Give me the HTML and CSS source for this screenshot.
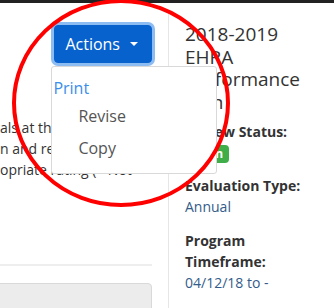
FILE: index.html
```html
<!DOCTYPE html>
<html lang="en">
<head>
    <meta charset="UTF-8">
    <meta name="viewport" content="width=device-width, initial-scale=1.0">
    <title>Performance Plan</title>
    <link rel="stylesheet" href="styles.css">
</head>
<body>
    <div class="topbar"></div>
    <div class="page">
        <div class="main">
            <div class="toolbar">
                <div class="actions">
                    <button type="button" class="btn-actions">Actions<span class="caret"></span></button>
                    <div class="dropdown">
                        <a class="item-print">Print</a>
                        <a class="item">Revise</a>
                        <a class="item">Copy</a>
                    </div>
                </div>
            </div>
            <p class="intro">als at the end of the<br>n and review the<br>opriate rating (* Not</p>
            <div class="divider"></div>
            <div class="panel"></div>
        </div>

        <aside class="side">
            <h2 class="plan-title">2018-2019 EHRA Performance Plan</h2>
            <div class="field first">
                <div class="field-label">Review Status:</div>
                <span class="badge">Open</span>
            </div>
            <div class="field">
                <div class="field-label">Evaluation Type:</div>
                <div class="field-value">Annual</div>
            </div>
            <div class="field">
                <div class="field-label">Program Timeframe:</div>
                <div class="field-value">04/12/18 to -</div>
            </div>
        </aside>
    </div>

    <!-- marca roja sobre la captura -->
    <svg class="mark" width="334" height="308" viewBox="0 0 334 308">
        <ellipse cx="121" cy="103" rx="107" ry="102" fill="none" stroke="#f00" stroke-width="4"/>
    </svg>
</body>
</html>
```

FILE: styles.css
```css
body {
    margin: 0;
    font-family: "Open Sans", "Liberation Sans", sans-serif;
    color: #333;
    background-color: #fff;
    overflow: hidden;
}
.topbar {
    height: 3px;
    background-color: #222;
}
.page {
    display: flex;
    align-items: flex-start;
}
.main {
    width: 168px;
    flex: none;
    padding-right: 16px;
    box-sizing: border-box;
}
.toolbar {
    display: flex;
    justify-content: flex-end;
    padding-top: 22px;
}
.actions {
    position: relative;
}
.btn-actions {
    display: flex;
    align-items: center;
    height: 38px;
    padding: 0 13px 0 10px;
    font-family: inherit;
    font-size: 16px;
    line-height: 24px;
    color: #fff;
    background-color: #0862cd;
    border: 1px solid #0862cd;
    border-radius: 4px;
    box-shadow: 0 0 0 3px #8dbcf2;
    cursor: pointer;
}
.caret {
    margin-left: 10px;
    border-top: 4px solid #fff;
    border-left: 4.5px solid transparent;
    border-right: 4.5px solid transparent;
}
.dropdown {
    position: absolute;
    top: calc(100% + 3px);
    left: -3px;
    z-index: 2;
    width: 166px;
    padding: 9px 0 9px 1px;
    box-sizing: border-box;
    background-color: #fff;
    border: 1px solid #d9d9d9;
    border-radius: 3px;
}
.item-print {
    display: block;
    font-size: 16px;
    line-height: 24px;
    color: #3b8eea;
}
.item {
    display: block;
    padding: 4px 0 4px 25px;
    font-size: 16px;
    line-height: 24px;
    color: #555;
}
.intro {
    margin: 54px 0 0;
    font-size: 14px;
    line-height: 21px;
    white-space: nowrap;
}
.divider {
    margin-top: 84px;
    height: 2px;
    background-color: #eee;
}
.panel {
    margin: 17px 0 0 -6px;
    height: 60px;
    background-color: #ececec;
    border: 1px solid #d9d9d9;
    border-radius: 4px;
}
.side {
    flex: 1;
    margin-top: 7px;
    padding: 13px 20px 0 16px;
    min-height: 300px;
    border-left: 1px solid #e6e6e6;
}
.plan-title {
    margin: 0;
    font-size: 19px;
    line-height: 22.5px;
    font-weight: 400;
}
.field {
    margin-top: 12px;
    font-size: 14px;
    line-height: 21px;
}
.field:last-child {
    margin-top: 13px;
}
.field.first {
    margin-top: 8px;
}
.field-label {
    font-weight: 700;
}
.field-value {
    color: #335c8a;
}
.badge {
    display: block;
    width: fit-content;
    margin-top: 3px;
    padding: 0 6px;
    font-size: 12px;
    line-height: 18px;
    font-weight: 700;
    color: #fff;
    background-color: #3fae49;
    border-radius: 4px;
}
.mark {
    position: absolute;
    top: 0;
    left: 0;
    z-index: 5;
    pointer-events: none;
}
```
